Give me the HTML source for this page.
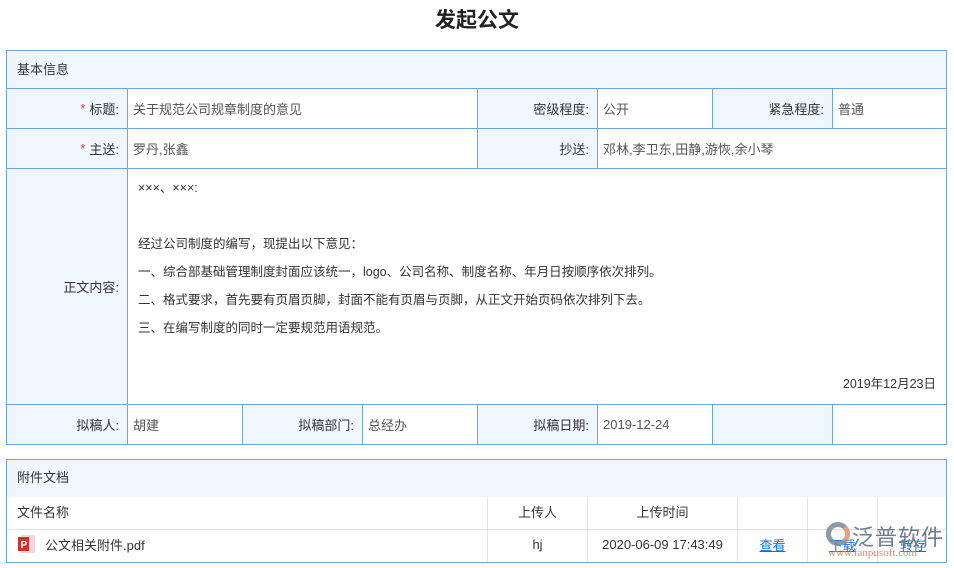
<!DOCTYPE html>
<html><head><meta charset="utf-8"><style>
*{margin:0;padding:0;box-sizing:border-box}
body{width:954px;height:568px;background:#fff;font-family:"Liberation Sans","Noto Sans CJK SC",sans-serif;font-size:13px;color:#333;position:relative;overflow:hidden}
.a{position:absolute}
.c{position:absolute;border:1px solid #6fa5d8;display:flex;align-items:center;padding:0 6px 0 5px}
.l{background:#f0f6fe;justify-content:flex-end;color:#333;padding-right:8px}
.v{background:#fff;color:#555}
.s{color:#e33;margin-right:4px}
.g{position:absolute;border-right:1px solid #e3e3e3;border-bottom:1px solid #e3e3e3;display:flex;align-items:center;justify-content:center;color:#333}
</style></head><body>
<div class="a" style="left:0;width:954px;top:4px;text-align:center;font-size:21px;font-weight:bold;color:#222">发起公文</div>

<div class="c l" style="left:6px;top:50px;width:941px;height:39px;justify-content:flex-start;padding-left:10px;padding-bottom:3px">基本信息</div>
<div class="c l" style="left:6px;top:88px;width:122px;height:41px"><span class="s">*</span>标题:</div>
<div class="c v" style="left:127px;top:88px;width:351px;height:41px">关于规范公司规章制度的意见</div>
<div class="c l" style="left:477px;top:88px;width:121px;height:41px">密级程度:</div>
<div class="c v" style="left:597px;top:88px;width:116px;height:41px">公开</div>
<div class="c l" style="left:712px;top:88px;width:121px;height:41px">紧急程度:</div>
<div class="c v" style="left:832px;top:88px;width:115px;height:41px">普通</div>

<div class="c l" style="left:6px;top:128px;width:122px;height:41px"><span class="s">*</span>主送:</div>
<div class="c v" style="left:127px;top:128px;width:351px;height:41px">罗丹,张鑫</div>
<div class="c l" style="left:477px;top:128px;width:121px;height:41px">抄送:</div>
<div class="c v" style="left:597px;top:128px;width:350px;height:41px">邓林,李卫东,田静,游恢,余小琴</div>

<div class="c l" style="left:6px;top:168px;width:122px;height:237px">正文内容:</div>
<div class="c v" style="left:127px;top:168px;width:820px;height:237px;display:block;color:#333;font-size:12.5px">
<div class="a" style="left:10px;top:8px">×××、×××:</div>
<div class="a" style="left:10px;top:64px">经过公司制度的编写，现提出以下意见：</div>
<div class="a" style="left:10px;top:92px">一、综合部基础管理制度封面应该统一，logo、公司名称、制度名称、年月日按顺序依次排列。</div>
<div class="a" style="left:10px;top:120px">二、格式要求，首先要有页眉页脚，封面不能有页眉与页脚，从正文开始页码依次排列下去。</div>
<div class="a" style="left:10px;top:148px">三、在编写制度的同时一定要规范用语规范。</div>
<div class="a" style="right:10px;top:204px">2019年12月23日</div>
</div>

<div class="c l" style="left:6px;top:404px;width:122px;height:41px">拟稿人:</div>
<div class="c v" style="left:127px;top:404px;width:116px;height:41px">胡建</div>
<div class="c l" style="left:242px;top:404px;width:121px;height:41px">拟稿部门:</div>
<div class="c v" style="left:362px;top:404px;width:116px;height:41px">总经办</div>
<div class="c l" style="left:477px;top:404px;width:121px;height:41px">拟稿日期:</div>
<div class="c v" style="left:597px;top:404px;width:116px;height:41px">2019-12-24</div>
<div class="c l" style="left:712px;top:404px;width:121px;height:41px"></div>
<div class="c v" style="left:832px;top:404px;width:115px;height:41px"></div>

<div class="a" style="left:6px;top:459px;width:941px;height:104px;border:1px solid #6fa5d8;overflow:hidden">
<div class="a" style="left:0;top:0;width:939px;height:37px;background:#f0f6fe;padding:7px 10px;color:#333">附件文档</div>
<div class="g" style="left:0;top:37px;width:481px;height:33px;justify-content:flex-start;padding-left:10px;padding-bottom:4px">文件名称</div>
<div class="g" style="left:481px;top:37px;width:100px;height:33px;padding-bottom:4px">上传人</div>
<div class="g" style="left:581px;top:37px;width:150px;height:33px;padding-bottom:4px">上传时间</div>
<div class="g" style="left:731px;top:37px;width:70px;height:33px"></div>
<div class="g" style="left:801px;top:37px;width:70px;height:33px"></div>
<div class="g" style="left:871px;top:37px;width:70px;height:33px;border-right:none"></div>
<div class="g" style="left:0;top:70px;width:481px;height:34px;justify-content:flex-start;padding-left:10px;padding-bottom:5px">
<svg width="20" height="20" viewBox="0 0 20 20" style="margin-right:8px"><rect x="4" y="1" width="14" height="18" fill="#f4d7d3"/><rect x="1" y="3" width="11" height="14" fill="#c9342c"/><text x="3.5" y="14" font-size="10" fill="#fff" font-family="Liberation Sans" font-weight="bold">P</text></svg>公文相关附件.pdf</div>
<div class="g" style="left:481px;top:70px;width:100px;height:34px;padding-bottom:5px">hj</div>
<div class="g" style="left:581px;top:70px;width:150px;height:34px;padding-bottom:5px">2020-06-09 17:43:49</div>
<div class="g" style="left:731px;top:70px;width:70px;height:34px;padding-bottom:5px;color:#1a6fd6;text-decoration:underline">查看</div>
<div class="g" style="left:801px;top:70px;width:70px;height:34px;padding-bottom:5px;color:#1a6fd6;text-decoration:underline">下载</div>
<div class="g" style="left:871px;top:70px;width:70px;height:34px;padding-bottom:5px;border-right:none;color:#1a6fd6;text-decoration:underline">转存</div>
</div>
<div class="a" style="left:826px;top:522px;width:24px;height:24px;border-radius:50%;border:5px solid #7a8a9a;border-right-color:#e09070;opacity:.85"></div>
<div class="a" style="left:852px;top:520px;font-size:22px;color:#6d7b8a;letter-spacing:1px">泛普软件</div>
<div class="a" style="left:828px;top:547px;font-size:11px;color:#d98a6a;font-family:'Liberation Serif',serif">www.fanpusoft.com</div>
</body></html>
